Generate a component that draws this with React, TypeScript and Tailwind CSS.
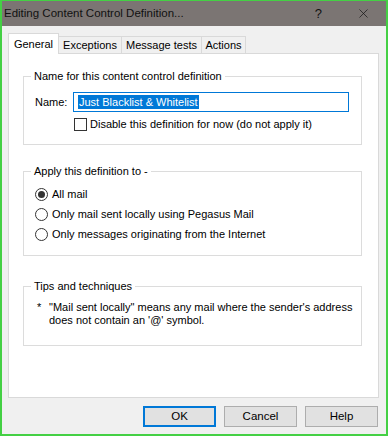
import { X } from 'lucide-react';

const font = { fontFamily: '"Liberation Sans", Arial, sans-serif' };

function Radio({ checked, label }: { checked?: boolean; label: string }) {
  return (
    <div className="flex h-[20px] items-center">
      <span className="flex h-[13px] w-[13px] items-center justify-center rounded-full border border-[#333] bg-white">
        {checked && <span className="h-[7px] w-[7px] rounded-full bg-[#333]" />}
      </span>
      <span className="ml-[4px]">{label}</span>
    </div>
  );
}

function Button({ label, primary }: { label: string; primary?: boolean }) {
  return (
    <button
      className={
        'h-[21px] w-[73px] bg-[#e1e1e1] text-[11.5px] leading-[15px] text-black ' +
        (primary ? 'border-2 border-[#0078d7]' : 'border border-[#adadad]')
      }
    >
      {label}
    </button>
  );
}

function Group({ title, className, children }: { title: string; className?: string; children: React.ReactNode }) {
  return (
    <fieldset className="border border-[#dcdcdc] p-0">
      <legend className="ml-[7px] px-[3px] leading-[16px]">{title}</legend>
      <div className={className}>{children}</div>
    </fieldset>
  );
}

export default function App() {
  const tabs = [
    { label: 'Exceptions', w: 'w-[63px]' },
    { label: 'Message tests', w: 'w-[80px]' },
    { label: 'Actions', w: 'w-[44px]' },
  ];

  return (
    <div
      className="flex h-[436px] w-[388px] flex-col border-x-2 border-t border-b-2 border-[#44d044] bg-[#f0f0f0] text-[11px] leading-[15px] text-black"
      style={font}
    >
      {/* title bar */}
      <div className="flex h-[25px] items-center bg-[#7b7573] pl-[2px] text-[#111]">
        <span className="flex-1 text-[11.5px]">Editing Content Control Definition...</span>
        <span className="mr-[34px] text-[13px]">?</span>
        <X size={15} strokeWidth={1.1} className="mr-[15px]" />
      </div>

      <div className="flex flex-1 flex-col pl-[6px] pr-[7px]">
        {/* tabs */}
        <div className="flex h-[27px] items-end">
          <div className="relative z-10 -mb-px flex h-[21px] w-[51px] items-start justify-center border-x border-t border-[#d9d9d9] bg-white pt-[3px]">
            General
          </div>
          {tabs.map((t) => (
            <div
              key={t.label}
              className={'flex h-[17px] items-center justify-center border-t border-r border-[#d9d9d9] bg-[#f0f0f0] ' + t.w}
            >
              {t.label}
            </div>
          ))}
        </div>

        {/* panel */}
        <div className="flex h-[345px] flex-col border border-[#d9d9d9] bg-white pt-[14px] pl-[14px] pr-[16px]">
          <fieldset className="border border-[#dcdcdc] p-0">
            <legend className="ml-[7px] px-[3px] leading-[16px]">Name for this content control definition</legend>
            <div className="pb-[13px] pl-[11px]">
              <div className="mt-[8px] flex items-center">
                <span className="w-[38px]">Name:</span>
                <div className="flex h-[20px] w-[276px] items-center border border-[#0078d7] pl-[4px]">
                  <span className="bg-[#0078d7] px-px leading-[14px] text-white">Just Blacklist &amp; Whitelist</span>
                </div>
              </div>
              <div className="mt-[6px] flex h-[13px] items-center pl-[39px]">
                <span className="h-[13px] w-[13px] border border-[#333] bg-white" />
                <span className="ml-[3px] w-[222px] overflow-hidden whitespace-nowrap">
                  Disable this definition for now (do not apply it)
                </span>
              </div>
            </div>
          </fieldset>

          <div className="mt-[18px]">
            <Group title="Apply this definition to -" className="pt-[5px] pb-[11px] pl-[11px]">
              <Radio checked label="All mail" />
              <Radio label="Only mail sent locally using Pegasus Mail" />
              <Radio label="Only messages originating from the Internet" />
            </Group>
          </div>

          <div className="mt-[22px]">
            <Group title="Tips and techniques" className="pt-[7px] pb-[18px] pl-[13px]">
              <div className="flex leading-[13px]">
                <span className="w-[12px]">*</span>
                <span className="w-[312px]">
                  "Mail sent locally" means any mail where the sender's address does not contain an '@' symbol.
                </span>
              </div>
            </Group>
          </div>
        </div>

        {/* buttons */}
        <div className="mt-[8px] flex justify-end gap-[8px] pr-px">
          <Button label="OK" primary />
          <Button label="Cancel" />
          <Button label="Help" />
        </div>
      </div>
    </div>
  );
}
